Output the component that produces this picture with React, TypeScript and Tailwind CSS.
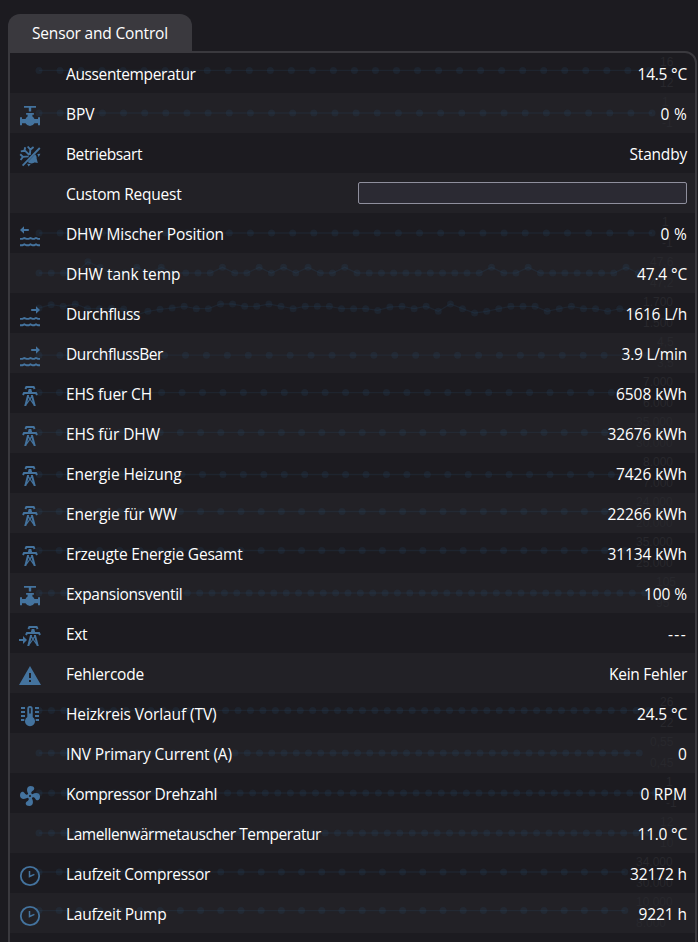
import { useLayoutEffect, useRef, useState } from "react";
import type { ReactNode } from "react";

type IconName = "valve" | "climate" | "waterLeft" | "waterRight" | "tower" | "towerImport" | "alert" | "coil" | "fan" | "clock";

type Chart = {
  y: number;
  step: number;
  count: number;
  labelX: number;
  top: string;
  bottom: string;
  ys?: number[];
};

type Sensor = {
  name: string;
  nameWidth: number;
  value?: string;
  valueWidth?: number;
  icon?: IconName;
  chart?: Chart;
};

const TOWER =
  "M8.28,5.45L6.5,4.55L7.76,2H16.23L17.5,4.55L15.72,5.44L15,4H9L8.28,5.45M18.62,8H14.09L13.3,5H10.7L9.91,8H5.38L4.1,10.55L5.89,11.44L6.62,10H17.38L18.1,11.45L19.89,10.56L18.62,8M17.77,22H15.7L15.46,21.1L12,15.9L8.53,21.1L8.3,22H6.23L9.12,11H11.19L10.83,12.35L12,14.1L13.16,12.35L12.81,11H14.88L17.77,22M11.4,15L10.5,13.65L9.32,18.13L11.4,15M14.68,18.12L13.5,13.64L12.6,15L14.68,18.12Z";

const FAN =
  "M12,11A1,1 0 0,0 11,12A1,1 0 0,0 12,13A1,1 0 0,0 13,12A1,1 0 0,0 12,11M12.5,2C17,2 17.11,5.57 14.75,6.75C13.76,7.24 13.32,8.29 13.13,9.22C13.61,9.42 14.03,9.73 14.35,10.13C18.05,8.13 22.03,8.92 22.03,12.5C22.03,17 18.46,17.1 17.28,14.73C16.78,13.74 15.72,13.3 14.79,13.11C14.59,13.59 14.28,14 13.88,14.34C15.87,18.03 15.08,22 11.5,22C7,22 6.91,18.42 9.27,17.24C10.25,16.75 10.69,15.71 10.89,14.79C10.4,14.59 9.97,14.27 9.65,13.87C5.96,15.85 2,15.07 2,11.5C2,7 5.56,6.89 6.74,9.26C7.24,10.25 8.29,10.68 9.22,10.87C9.41,10.39 9.73,9.97 10.14,9.65C8.15,5.96 8.94,2 12.5,2Z";

const WAVES =
  "M2 14.9H4.5L6.3 14L8.6 14.9L10.8 14.9L12.4 14L14.6 14.9H16.2L18 14L20 14.9H22M2 21.3H4.5L6.3 20.4L8.6 21.3H10.8L12.4 20.4L14.6 21.3H16.2L18 20.4L20 21.3H22";

const ICONS: Record<IconName, ReactNode> = {
  valve: (
    <path d="M6 2H18V3.8H13.2V7.4H10.8V3.8H6ZM8.1 8.9H15.9V10.8H14.4V12.6Q15.8 13.4 16.5 15H20V13.2H22V21.2H20V19.3H16.5Q15 22 12 22T7.5 19.3H4V21.2H2V13.2H4V15H7.5Q8.2 13.4 9.6 12.6V10.8H8.1Z" />
  ),
  climate: (
    <>
      <path
        d="M4.6 21.6L21.8 4M11.4 11L6.2 5.8M2.8 7.4L6.4 6.8L7.2 3.2M11.8 10.8L12.4 5.4M9.7 2.5L12.4 5.6L15.6 3M10.6 12.4L5 12.9M2.2 10.2L5 12.9L2.6 16"
        fill="none"
        stroke="currentColor"
        strokeWidth="1.9"
      />
      <path d="M17.1 10.2A5 5 0 0 1 9.7 17.9ZM19.3 10L22.4 9.7L20.7 12.9ZM18.8 15L19.8 19.1L15.8 18.3ZM9.1 19.8L12.8 20L10.6 22.6Z" />
    </>
  ),
  waterLeft: (
    <>
      <path d="M2 6L6 2.2V5H10.8V7H6V9.8Z" />
      <path d={WAVES} fill="none" stroke="currentColor" strokeWidth="1.9" />
    </>
  ),
  waterRight: (
    <>
      <path d="M22 6L18 2.2V5H13.2V7H18V9.8Z" />
      <path d={WAVES} fill="none" stroke="currentColor" strokeWidth="1.9" />
    </>
  ),
  tower: <path d={TOWER} />,
  towerImport: (
    <>
      <path d={TOWER} transform="translate(3 0)" />
      <path d="M1 15.1H5V12L9 16L5 20V16.9H1Z" />
    </>
  ),
  alert: <path d="M13 14H11V9H13M13 18H11V16H13M1 21H23L12 2L1 21Z" />,
  coil: (
    <>
      <path
        fillRule="evenodd"
        d="M9.3 4.7A2.7 2.7 0 0 1 14.7 4.7V13A5 5 0 1 1 9.3 13ZM11.2 4.5V9.5H12.8V4.5A.8.8 0 0 0 11.2 4.5Z"
      />
      <path
        d="M3 4H7M3 8H7M3 12H7M3 16H6.3M17 4H21M17 8H21M17 12H21M17.7 16H21"
        fill="none"
        stroke="currentColor"
        strokeWidth="1.8"
      />
    </>
  ),
  fan: <path d={FAN} />,
  clock: (
    <>
      <circle cx="12" cy="12" r="9.2" fill="none" stroke="currentColor" strokeWidth="1.8" />
      <path d="M11.5 7V12.5L16.4 10.4" fill="none" stroke="currentColor" strokeWidth="1.5" />
    </>
  ),
};

const chart = (
  y: number,
  step: number,
  count: number,
  labelX: number,
  top: string,
  bottom: string,
  ys?: number[],
): Chart => ({ y, step, count, labelX, top, bottom, ys });

const TANK = Array.from({ length: 50 }, (_, i) =>
  i === 4 ? 8.8 : [5, 8, 10, 15, 18, 20, 22, 25, 37, 40, 48].includes(i) ? 14.3 : 20,
);

const FLOW = [
  15, 11.7, 13.3, 11, 15.7, 15.7, 15.3, 16, 22, 18.3, 16.3, 15, 13.3, 15.7, 15.7, 11, 11, 13.3, 13.3, 11, 13.3, 15.7,
  13.3, 13.3, 13.3, 15.7, 15.7, 15.7, 17.4, 14, 13.3, 15.7, 13.3, 18.3, 11, 15.7, 20, 18.3, 15.7, 13.3, 13.3, 13.3, 18.3,
  15.7, 13.3, 15.7, 15.7, 18.3, 15.7, 18.3,
];

const SENSORS: Sensor[] = [
  { name: "Aussentemperatur", nameWidth: 129.5, value: "14.5 °C", valueWidth: 49.5, chart: chart(17.4, 21.03, 30, 660, "16", "12") },
  { name: "BPV", nameWidth: 28.5, value: "0 %", valueWidth: 26.5, icon: "valve", chart: chart(20, 21.14, 30, 662, "1", "-1") },
  { name: "Betriebsart", nameWidth: 76, value: "Standby", valueWidth: 57.5, icon: "climate" },
  { name: "Custom Request", nameWidth: 115.5 },
  { name: "DHW Mischer Position", nameWidth: 158, value: "0 %", valueWidth: 26.5, icon: "waterLeft", chart: chart(20, 21.14, 30, 662, "1", "-1") },
  { name: "DHW tank temp", nameWidth: 114.5, value: "47.4 °C", valueWidth: 50, chart: chart(20, 12.23, 50, 650, "47,6", "47,2", TANK) },
  { name: "Durchfluss", nameWidth: 74, value: "1616 L/h", valueWidth: 61.5, icon: "waterRight", chart: chart(15.7, 12.1, 50, 643, "1.700", "1.500", FLOW) },
  { name: "DurchflussBer", nameWidth: 97, value: "3.9 L/min", valueWidth: 65.5, icon: "waterRight", chart: chart(22.2, 20.93, 30, 657, "4,5", "3,5") },
  { name: "EHS fuer CH", nameWidth: 86, value: "6508 kWh", valueWidth: 71, icon: "tower", chart: chart(19.6, 20.44, 30, 643, "7.000", "6.000") },
  { name: "EHS für DHW", nameWidth: 94, value: "32676 kWh", valueWidth: 79.5, icon: "tower", chart: chart(19.4, 20.2, 30, 636, "35.000", "30.000") },
  { name: "Energie Heizung", nameWidth: 115.5, value: "7426 kWh", valueWidth: 71, icon: "tower", chart: chart(21.5, 20.44, 30, 643, "8.000", "7.000") },
  { name: "Energie für WW", nameWidth: 111, value: "22266 kWh", valueWidth: 79.5, icon: "tower", chart: chart(18.5, 20.2, 30, 636, "24.000", "20.000") },
  { name: "Erzeugte Energie Gesamt", nameWidth: 176.5, value: "31134 kWh", valueWidth: 79.5, icon: "tower", chart: chart(17.5, 20.2, 30, 636, "35.000", "25.000") },
  { name: "Expansionsventil", nameWidth: 116.5, value: "100 %", valueWidth: 43, icon: "valve", chart: chart(20, 12.36, 50, 656, "105", "95") },
  { name: "Ext", nameWidth: 21, value: "---", valueWidth: 19, icon: "towerImport" },
  { name: "Fehlercode", nameWidth: 78, value: "Kein Fehler", valueWidth: 78, icon: "alert" },
  { name: "Heizkreis Vorlauf (TV)", nameWidth: 150.5, value: "24.5 °C", valueWidth: 50, icon: "coil", chart: chart(17.4, 12.44, 50, 660, "26", "22") },
  { name: "INV Primary Current (A)", nameWidth: 166, value: "0", valueWidth: 9, chart: chart(20, 12.25, 50, 650, "0,55", "0,45") },
  { name: "Kompressor Drehzahl", nameWidth: 151, value: "0 RPM", valueWidth: 46.5, icon: "fan", chart: chart(20, 12.57, 50, 666, "1", "-1") },
  { name: "Lamellenwärmetauscher Temperatur", nameWidth: 255, value: "11.0 °C", valueWidth: 49.5, chart: chart(20, 12.44, 50, 660, "12", "10") },
  { name: "Laufzeit Compressor", nameWidth: 144, value: "32172 h", valueWidth: 57, icon: "clock", chart: chart(19, 20.2, 30, 636, "34.000", "30.000") },
  { name: "Laufzeit Pump", nameWidth: 100.5, value: "9221 h", valueWidth: 48.5, icon: "clock", chart: chart(17.6, 20.2, 30, 636, "10.000", "8.000") },
];

/** Text whose tracking is adjusted so that it fills the given column width. */
function FitText({ text, width }: { text: string; width: number }) {
  const ref = useRef<HTMLSpanElement>(null);
  const [tracking, setTracking] = useState(0);
  useLayoutEffect(() => {
    if (ref.current) {
      const natural = ref.current.getBoundingClientRect().width;
      setTracking((width - natural) / text.length);
    }
  }, [text, width]);
  return (
    <span ref={ref} className="whitespace-pre" style={{ letterSpacing: `${tracking}px` }}>
      {text}
    </span>
  );
}

function Sparkline({ data }: { data: Chart }) {
  const points = Array.from({ length: data.count }, (_, i) => ({
    x: 29 + i * data.step,
    y: data.ys ? data.ys[i] : data.y,
  }));
  return (
    <svg className="pointer-events-none absolute inset-0 h-10 w-full" aria-hidden="true">
      <g className="fill-[#28282d] font-['Liberation_Sans',sans-serif] text-[12px]">
        <text x={data.labelX - 10} y="13">{data.top}</text>
        <text x={data.labelX - 10} y="34">{data.bottom}</text>
      </g>
      <polyline
        points={points.map((p) => `${p.x},${p.y}`).join(" ")}
        fill="none"
        stroke="#2a5f86"
        strokeOpacity="0.14"
        strokeWidth="1.3"
      />
      {points.map((p, i) => (
        <circle key={i} cx={p.x} cy={p.y} r="3.5" fill="#2a5f86" fillOpacity="0.14" />
      ))}
    </svg>
  );
}

function SensorRow({ sensor }: { sensor: Sensor }) {
  return (
    <div className="relative flex h-10 shrink-0 items-center pr-2 pl-2 even:bg-[#222126]">
      <div className="mr-6 flex h-10 w-6 shrink-0 items-end pb-[5px] text-[#44739e]">
        {sensor.icon && (
          <svg viewBox="0 0 24 24" className="size-6" fill="currentColor">
            {ICONS[sensor.icon]}
          </svg>
        )}
      </div>
      {sensor.chart && <Sparkline data={sensor.chart} />}
      <div className="relative flex flex-1 items-center justify-between pt-px leading-5">
        <FitText text={sensor.name} width={sensor.nameWidth} />
        {sensor.value !== undefined && <FitText text={sensor.value} width={sensor.valueWidth ?? 0} />}
      </div>
      {sensor.value === undefined && (
        <input
          type="text"
          aria-label={sensor.name}
          className="h-[22px] w-[329px] rounded-[2px] border border-[#8f8f9d] bg-[#2b2a33] px-1 text-sm outline-none"
        />
      )}
    </div>
  );
}

export default function App() {
  return (
    <div className="flex h-[942px] w-[698px] flex-col overflow-hidden bg-[#1c1b20] pt-[14px] pl-2 font-['Open_Sans','Noto_Sans',sans-serif] text-[15.5px] text-white">
      <div className="flex h-[37px] w-[184px] shrink-0 items-center rounded-t-xl bg-[#3a393e] pt-[3px] pl-6">
        <FitText text="Sensor and Control" width={136} />
      </div>
      <div className="flex h-[900px] w-[689px] shrink-0 flex-col overflow-hidden rounded-tr-xl border-2 border-[#3a393e]">
        {SENSORS.map((s) => (
          <SensorRow key={s.name} sensor={s} />
        ))}
      </div>
    </div>
  );
}
